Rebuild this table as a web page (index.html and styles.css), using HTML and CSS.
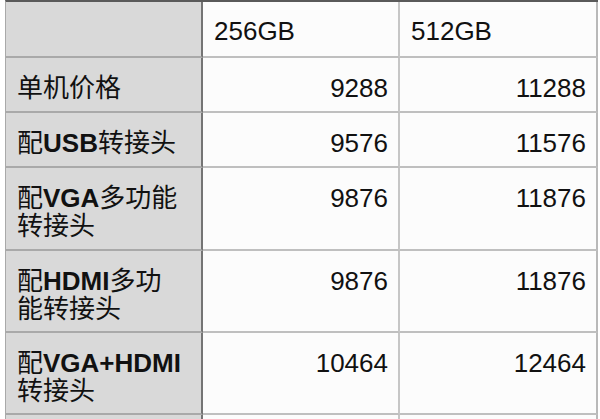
FILE: index.html
```html
<!DOCTYPE html>
<html lang="zh">
<head>
<meta charset="utf-8">
<title>价格表</title>
<link rel="stylesheet" href="styles.css">
</head>
<body>
<div class="sheet">
  <div class="cell head label"></div>
  <div class="cell head">256GB</div>
  <div class="cell head last">512GB</div>

  <div class="cell label">单机价格</div>
  <div class="cell num">9288</div>
  <div class="cell num last">11288</div>

  <div class="cell label">配<b>USB</b>转接头</div>
  <div class="cell num">9576</div>
  <div class="cell num last">11576</div>

  <div class="cell label">配<b>VGA</b>多功能<br>转接头</div>
  <div class="cell num">9876</div>
  <div class="cell num last">11876</div>

  <div class="cell label">配<b>HDMI</b>多功<br>能转接头</div>
  <div class="cell num">9876</div>
  <div class="cell num last">11876</div>

  <div class="cell label">配<b>VGA+HDMI</b><br>转接头</div>
  <div class="cell num">10464</div>
  <div class="cell num last">12464</div>

  <div class="cell tail label"></div>
  <div class="cell tail"></div>
  <div class="cell tail last"></div>
</div>
</body>
</html>
```

FILE: styles.css
```css
html, body {
  margin: 0;
  padding: 0;
  background: #ffffff;
}

body {
  width: 600px;
  height: 419px;
  overflow: hidden;
  font-family: "Liberation Sans", "Noto Sans CJK SC", sans-serif;
  font-size: 26px;
  line-height: 28px;
  color: #111111;
}

.sheet {
  display: grid;
  grid-template-columns: 197px 197px 198px;
  grid-template-rows: 56px 55px 55px 83px 82px 82px 4px;
  margin-left: 5px;
  border-top: 2px solid #5a5a5a;
  border-left: 1px solid #a9a9a9;
  width: 592px;
}

.cell {
  box-sizing: border-box;
  background: #fcfcfc;
  border-bottom: 2px solid #bfbfbf;
  border-right: 2px solid #c6c6c6;
  padding: 16px 11px 0 11px;
  white-space: nowrap;
}

.label {
  background: #d9d9d9;
  border-right: 2px solid #747474;
  border-bottom-color: #a9a9a9;
}

.num {
  text-align: right;
  padding-right: 10px;
}

.last {
  border-right-color: #b9b9b9;
}

.head {
  padding-top: 15px;
}

.tail {
  padding: 0;
  border-bottom: 0;
}

.label b {
  font-weight: 700;
}
```
